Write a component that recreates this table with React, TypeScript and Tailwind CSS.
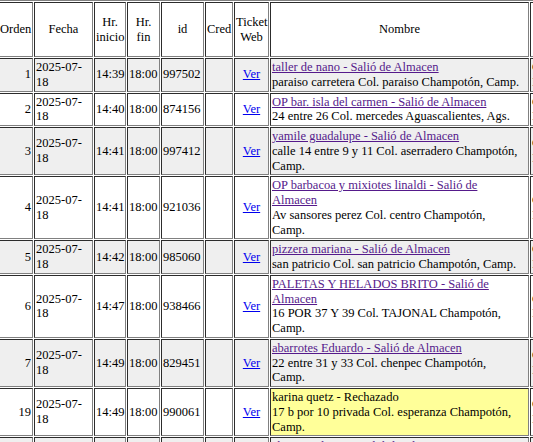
import React from 'react';

interface Entrega {
  orden: number;
  inicio: string;
  id: string;
  nombre: string;
  direccion: string;
  rechazado?: boolean;
}

const entregas: Entrega[] = [
  { orden: 1, inicio: '14:39', id: '997502', nombre: 'taller de nano - Salió de Almacen', direccion: 'paraiso carretera Col. paraiso Champotón, Camp.' },
  { orden: 2, inicio: '14:40', id: '874156', nombre: 'OP bar. isla del carmen - Salió de Almacen', direccion: '24 entre 26 Col. mercedes Aguascalientes, Ags.' },
  { orden: 3, inicio: '14:41', id: '997412', nombre: 'yamile guadalupe - Salió de Almacen', direccion: 'calle 14 entre 9 y 11 Col. aserradero Champotón,\nCamp.' },
  { orden: 4, inicio: '14:41', id: '921036', nombre: 'OP barbacoa y mixiotes linaldi - Salió de\nAlmacen', direccion: 'Av sansores perez Col. centro Champotón,\nCamp.' },
  { orden: 5, inicio: '14:42', id: '985060', nombre: 'pizzera mariana - Salió de Almacen', direccion: 'san patricio Col. san patricio Champotón, Camp.' },
  { orden: 6, inicio: '14:47', id: '938466', nombre: 'PALETAS Y HELADOS BRITO - Salió de\nAlmacen', direccion: '16 POR 37 Y 39 Col. TAJONAL Champotón,\nCamp.' },
  { orden: 7, inicio: '14:49', id: '829451', nombre: 'abarrotes Eduardo - Salió de Almacen', direccion: '22 entre 31 y 33 Col. chenpec Champotón,\nCamp.' },
  { orden: 19, inicio: '14:49', id: '990061', nombre: 'karina quetz - Rechazado', direccion: '17 b por 10 privada Col. esperanza Champotón,\nCamp.', rechazado: true },
  { orden: 20, inicio: '14:52', id: '990184', nombre: 'abarrotes lupita - Salió de Almacen', direccion: 'calle 20 Col. centro Champotón, Camp.' },
];

const cell = 'border border-[gray] [--tw-border-style:inset] [border-style:inset] p-px align-middle whitespace-pre';
const head = `${cell} font-normal text-center`;

export default function App() {
  return (
    <div className="h-screen w-full overflow-hidden bg-white text-black font-['Liberation_Serif','Times_New_Roman',serif] text-[12.5px] leading-[14.75px]">
      <table className="-ml-[4px] w-[696px] table-fixed border-separate border-spacing-[1px] border border-[gray] [--tw-border-style:outset] [border-style:outset]">
        <thead>
          <tr className="h-[55px]">
            <th className={`${head} w-[35px]`}>Orden</th>
            <th className={`${head} w-[59px]`}>Fecha</th>
            <th className={`${head} w-[32px]`}>{'Hr.\ninicio'}</th>
            <th className={`${head} w-[33px]`}>{'Hr.\nfin'}</th>
            <th className={`${head} w-[43px]`}>id</th>
            <th className={`${head} w-[28px]`}>Cred</th>
            <th className={`${head} w-[35px]`}>{'Ticket\nWeb'}</th>
            <th className={`${head} w-[259px]`}>Nombre</th>
            <th className={`${head} w-[160px]`}>Pago</th>
          </tr>
        </thead>
        <tbody>
          {entregas.map((e, i) => {
            const bg = i % 2 === 0 ? 'bg-[#efefef]' : 'bg-white';
            return (
              <tr key={e.orden}>
                <td className={`${cell} ${bg} text-right`}>{e.orden}</td>
                <td className={`${cell} ${bg}`}>{'2025-07-\n18'}</td>
                <td className={`${cell} ${bg}`}>{e.inicio}</td>
                <td className={`${cell} ${bg}`}>18:00</td>
                <td className={`${cell} ${bg}`}>{e.id}</td>
                <td className={`${cell} ${bg}`}></td>
                <td className={`${cell} ${bg} text-center`}>
                  <a href="#" className="text-[#0000ee] underline">Ver</a>
                </td>
                <td className={`${cell} ${e.rechazado ? 'bg-[#ffff99]' : bg}`}>
                  {e.rechazado ? (
                    <span>{e.nombre}</span>
                  ) : (
                    <a href="#" className="text-[#551a8b] underline">{e.nombre}</a>
                  )}
                  <br />
                  {e.direccion}
                </td>
                <td className={`${cell} ${bg}`}>{'Contado\nImporte: $0.00'}</td>
              </tr>
            );
          })}
        </tbody>
      </table>
    </div>
  );
}
